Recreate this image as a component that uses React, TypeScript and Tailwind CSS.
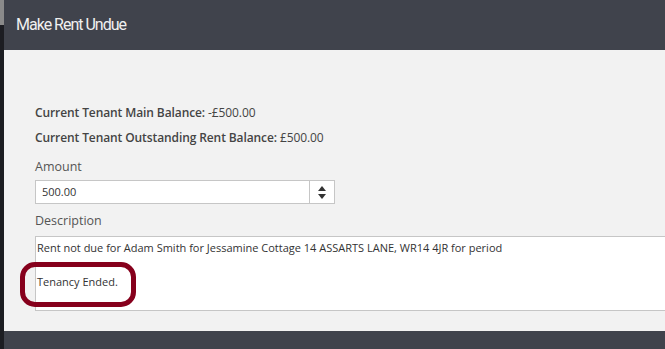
import React from 'react';

export default function App() {
  return (
    <div className="flex h-[349px] w-[665px] overflow-hidden bg-[#1c1d22]" style={{ fontFamily: '"Open Sans", sans-serif' }}>
      <div className="flex w-[4px] shrink-0 flex-col">
        <div className="h-[25px] bg-[#8a8a8a]" />
        <div className="flex-1 bg-[#1c1d22]" />
      </div>
      <div className="flex min-w-0 flex-1 flex-col">
        <div className="flex h-[50px] shrink-0 items-center bg-[#40434c] pb-[1px] pl-[12px]">
          <h1
            className="text-[16px] font-normal tracking-[-1px] text-[#f0f0f0]"
            style={{ fontFamily: 'Roboto, sans-serif' }}
          >
            Make Rent Undue
          </h1>
        </div>
        <div className="flex-1 bg-[#f2f2f2] pl-[31px] pt-[50px] text-[#444]">
          <p className="text-[12px] leading-[25px] tracking-[-0.1px]">
            <span className="font-semibold">Current Tenant Main Balance:</span> -£500.00
          </p>
          <p className="text-[12px] leading-[25px] tracking-[-0.1px]">
            <span className="font-semibold">Current Tenant Outstanding Rent Balance:</span> £500.00
          </p>
          <label className="mt-[7px] block text-[12.5px] leading-[20px] text-[#555]">Amount</label>
          <div className="mt-[3px] flex h-[24px] w-[300px] border border-[#c6c6c6] bg-white">
            <input
              readOnly
              value="500.00"
              className="min-w-0 flex-1 bg-transparent px-[6px] text-[11px] text-[#333] outline-none"
            />
            <div className="flex w-[25px] flex-col items-center justify-center gap-[3px] border-l border-[#c6c6c6]">
              <svg width="8" height="5" viewBox="0 0 8 5"><path d="M4 0L8 5H0Z" fill="#333" /></svg>
              <svg width="8" height="5" viewBox="0 0 8 5"><path d="M0 0H8L4 5Z" fill="#333" /></svg>
            </div>
          </div>
          <label className="mt-[7px] block text-[12.5px] leading-[20px] text-[#555]">Description</label>
          <div className="relative mt-[5px]">
            <div className="h-[75px] w-[640px] border border-[#c6c6c6] bg-white px-[1px] pt-[2px] text-[11px] leading-[17px] text-[#333]">
              <p>Rent not due for Adam Smith for Jessamine Cottage 14 ASSARTS LANE, WR14 4JR for period</p>
              <p className="mt-[17px]">Tenancy Ended.</p>
            </div>
            <div className="absolute left-[-15px] top-[26px] h-[45px] w-[116px] rounded-[15px] border-[5px] border-[#86001c]" />
          </div>
        </div>
        <div className="h-[18px] shrink-0 bg-[#40434c]" />
      </div>
    </div>
  );
}
